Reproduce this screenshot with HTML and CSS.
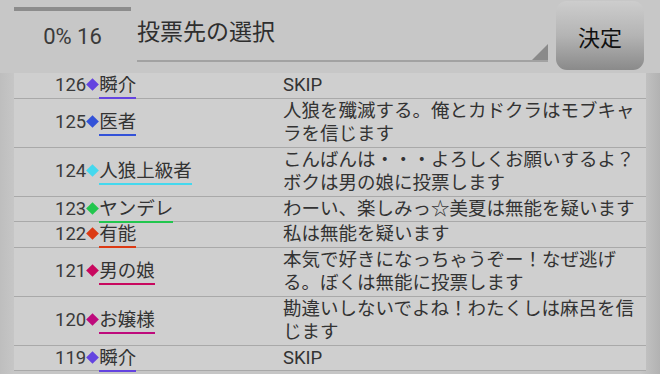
FILE: index.html
```html
<!DOCTYPE html>
<html lang="ja">
<head>
  <meta charset="UTF-8" />
  <meta name="viewport" content="width=device-width, initial-scale=1" />
  <title>投票先の選択</title>
  <link rel="stylesheet" href="styles.css">
</head>
<body>
  <div class="top-bar">
    <div class="progress-box">
      <div class="progress-track"></div>
      <div class="progress-text">0% 16</div>
    </div>
    <div class="vote-select">
      <span class="vote-title">投票先の選択</span>
      <span class="select-corner"></span>
    </div>
    <button class="decide-btn">決定</button>
  </div>

  <div class="log-list">
    <div class="log-row">
      <div class="who"><span class="num">126</span><span class="dia c-shun"></span><span class="name c-shun">瞬介</span></div>
      <div class="msg">SKIP</div>
    </div>
    <div class="log-row">
      <div class="who"><span class="num">125</span><span class="dia c-doc"></span><span class="name c-doc">医者</span></div>
      <div class="msg">人狼を殲滅する。俺とカドクラはモブキャラを信じます</div>
    </div>
    <div class="log-row">
      <div class="who"><span class="num">124</span><span class="dia c-wolf"></span><span class="name c-wolf">人狼上級者</span></div>
      <div class="msg">こんばんは・・・よろしくお願いするよ？ボクは男の娘に投票します</div>
    </div>
    <div class="log-row">
      <div class="who"><span class="num">123</span><span class="dia c-yan"></span><span class="name c-yan">ヤンデレ</span></div>
      <div class="msg">わーい、楽しみっ☆美夏は無能を疑います</div>
    </div>
    <div class="log-row">
      <div class="who"><span class="num">122</span><span class="dia c-yuu"></span><span class="name c-yuu">有能</span></div>
      <div class="msg">私は無能を疑います</div>
    </div>
    <div class="log-row">
      <div class="who"><span class="num">121</span><span class="dia c-oto"></span><span class="name c-oto">男の娘</span></div>
      <div class="msg">本気で好きになっちゃうぞー！なぜ逃げる。ぼくは無能に投票します</div>
    </div>
    <div class="log-row">
      <div class="who"><span class="num">120</span><span class="dia c-jou"></span><span class="name c-jou">お嬢様</span></div>
      <div class="msg">勘違いしないでよね！わたくしは麻呂を信じます</div>
    </div>
    <div class="log-row">
      <div class="who"><span class="num">119</span><span class="dia c-shun"></span><span class="name c-shun">瞬介</span></div>
      <div class="msg">SKIP</div>
    </div>
  </div>
</body>
</html>
```

FILE: styles.css
```css
body {
  margin: 0;
  height: 374px;
  overflow: hidden;
  background: linear-gradient(to right, #bebebe 0, #c6c6c6 14px, #c6c6c6 640px, #b2b2b2 660px);
  font-family: Roboto, "Noto Sans CJK JP", sans-serif;
  color: #333;
}

.top-bar {
  display: flex;
  align-items: flex-start;
  height: 73px;
  background: #c7c7c7;
}

.progress-box {
  width: 117px;
  padding-left: 14px;
  margin-right: 6px;
}
.progress-track {
  margin-top: 7px;
  height: 4px;
  background: #8c8c8c;
}
.progress-text {
  margin-top: 12px;
  text-align: center;
  font-size: 22px;
  line-height: 28px;
  color: #3a3a3a;
}

.vote-select {
  position: relative;
  width: 411px;
  height: 60px;
  border-bottom: 2px solid #a2a2a2;
}
.vote-title {
  display: block;
  margin-top: 18px;
  font-size: 23px;
  line-height: 30px;
  color: #2e2e2e;
}
.select-corner {
  position: absolute;
  right: 0;
  bottom: 0;
  width: 0;
  height: 0;
  border-left: 16px solid transparent;
  border-bottom: 16px solid #8a8a8a;
}

.decide-btn {
  margin: 1px 0 0 8px;
  width: 88px;
  height: 69px;
  border: none;
  border-radius: 11px;
  background: linear-gradient(to bottom, #cdcdcd 0%, #b4b4b4 50%, #8a8a8a 100%);
  font-family: "Noto Sans CJK JP", sans-serif;
  font-size: 22px;
  color: #111;
  padding: 0;
}

.log-list {
  margin: 0 14px;
  background: #cfcfcf;
}
.log-row {
  display: grid;
  grid-template-columns: 269px 1fr;
  align-items: center;
  padding-top: 1px;
  border-bottom: 1px solid #a9a9a9;
  font-size: 18.5px;
  line-height: 23.5px;
}
.who {
  padding-left: 41px;
  white-space: nowrap;
}
.num {
  color: #3a3a3a;
}
.dia {
  display: inline-block;
  width: 9px;
  height: 9px;
  margin: 0 2px 0 2px;
  transform: rotate(45deg);
  vertical-align: 2px;
}
.name {
  border-bottom: 2px solid;
  color: #333;
  padding-bottom: 1px;
}
.msg {
  padding-right: 8px;
  color: #333;
}

.dia.c-shun { background: #6444e0; }
.name.c-shun { border-color: #6444e0; }
.dia.c-doc { background: #3352d8; }
.name.c-doc { border-color: #3352d8; }
.dia.c-wolf { background: #44d8ee; }
.name.c-wolf { border-color: #44d8ee; }
.dia.c-yan { background: #22c64e; }
.name.c-yan { border-color: #22c64e; }
.dia.c-yuu { background: #dc3a14; }
.name.c-yuu { border-color: #dc3a14; }
.dia.c-oto { background: #c8085e; }
.name.c-oto { border-color: #c8085e; }
.dia.c-jou { background: #be0a7c; }
.name.c-jou { border-color: #be0a7c; }
```
